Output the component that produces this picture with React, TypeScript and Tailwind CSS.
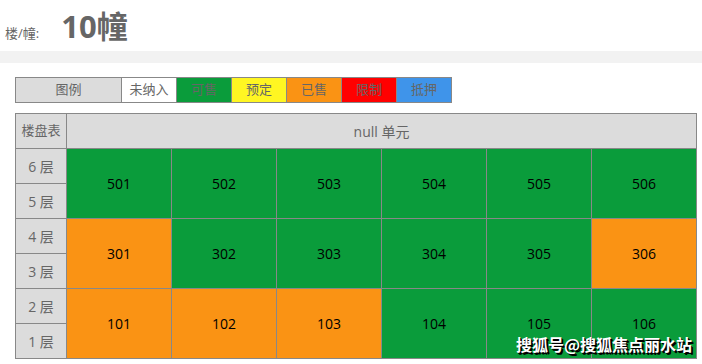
const cn = { fontFamily: '"Segoe UI", "Open Sans", "Noto Sans CJK SC", sans-serif' };

const GREEN = "bg-[#0a9c3b]";
const ORANGE = "bg-[#fa9314]";

const legend = [
  { label: "未纳入", cls: "bg-white w-[55px]" },
  { label: "可售", cls: "bg-[#0a9c3b] w-[55px]" },
  { label: "预定", cls: "bg-[#fff622] w-[55px]" },
  { label: "已售", cls: "bg-[#fa9314] w-[55px]" },
  { label: "限制", cls: "bg-[#ff0000] w-[55px]" },
  { label: "抵押", cls: "bg-[#3f94ea] w-[55px]" },
];

const groups = [
  { floors: ["6 层", "5 层"], units: [501, 502, 503, 504, 505, 506], sold: [] as number[] },
  { floors: ["4 层", "3 层"], units: [301, 302, 303, 304, 305, 306], sold: [301, 306] },
  { floors: ["2 层", "1 层"], units: [101, 102, 103, 104, 105, 106], sold: [101, 102, 103] },
];

export default function App() {
  return (
    <div className="relative w-[702px] h-[364px] overflow-hidden bg-white text-[#666]" style={cn}>
      {/* title */}
      <div className="flex items-baseline h-[51px] pl-[5px] pt-[6px]">
        <span className="text-[13px]">楼/幢:</span>
        <span className="ml-[22px] text-[31px] font-bold leading-[40px]">10幢</span>
      </div>
      <div className="h-[12px] bg-[#f2f2f2]" />

      {/* legend */}
      <table className="mt-[14px] ml-[15px] border-collapse text-[13px]">
        <tbody>
          <tr className="h-[25px]">
            <td className="w-[106px] border border-[#888] bg-[#dcdcdc] text-center">图例</td>
            {legend.map((l) => (
              <td key={l.label} className={`border border-[#888] text-center p-0 ${l.cls}`}>
                {l.label}
              </td>
            ))}
          </tr>
        </tbody>
      </table>

      {/* floor plan */}
      <table className="mt-[10px] ml-[15px] border-collapse table-fixed w-[681px]">
        <colgroup>
          <col className="w-[51px]" />
          <col className="w-[105px]" />
          <col className="w-[105px]" />
          <col className="w-[105px]" />
          <col className="w-[105px]" />
          <col className="w-[105px]" />
          <col className="w-[105px]" />
        </colgroup>
        <tbody>
          <tr className="h-[35px] bg-[#dcdcdc]">
            <td className="border border-[#888] text-center text-[13px] p-0">楼盘表</td>
            <td colSpan={6} className="border border-[#888] text-center text-[14px]">
              null 单元
            </td>
          </tr>
          {groups.map((g) =>
            g.floors.map((f, fi) => (
              <tr key={f} className="h-[35px]">
                <td className="border border-[#888] bg-[#dcdcdc] text-center text-[14px] p-0">{f}</td>
                {fi === 0 &&
                  g.units.map((u) => (
                    <td
                      key={u}
                      rowSpan={2}
                      className={`border border-[#888] text-center text-[14px] text-black ${
                        g.sold.includes(u) ? ORANGE : GREEN
                      }`}
                    >
                      {u}
                    </td>
                  ))}
              </tr>
            ))
          )}
        </tbody>
      </table>

      {/* watermark */}
      <div
        className="absolute left-[516px] top-[334px] whitespace-nowrap text-[16px] leading-[20px] font-bold text-white"
        style={{ fontFamily: '"Noto Sans CJK SC", sans-serif', textShadow: "2px 2px 0 #000, 1px 1px 0 #000" }}
      >
        搜狐号@搜狐焦点丽水站
      </div>
    </div>
  );
}
